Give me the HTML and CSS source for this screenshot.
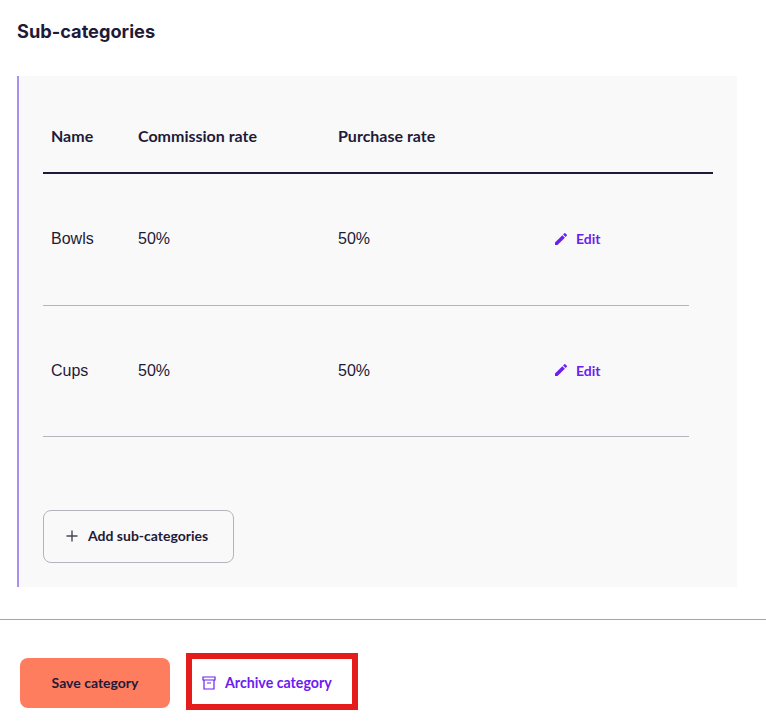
FILE: index.html
```html
<!DOCTYPE html>
<html lang="en">
<head>
    <meta charset="UTF-8" />
    <title>Sub-categories</title>
    <link rel="stylesheet" href="styles.css">
</head>
<body>
<section class="sub-section">
    <h2>Sub-categories</h2>
    <div class="panel">
        <div class="row head">
            <div>Name</div>
            <div>Commission rate</div>
            <div>Purchase rate</div>
        </div>
        <div class="row item">
            <div>Bowls</div>
            <div>50%</div>
            <div>50%</div>
            <a class="edit" href="#">
                <svg viewBox="0 0 24 24" width="16" height="16"><path d="M3 17.25V21h3.75L17.81 9.94l-3.75-3.75L3 17.25zM20.71 7.04a1 1 0 0 0 0-1.41l-2.34-2.34a1 1 0 0 0-1.41 0l-1.83 1.83 3.75 3.75 1.83-1.83z"/></svg>
                Edit
            </a>
        </div>
        <div class="row item">
            <div>Cups</div>
            <div>50%</div>
            <div>50%</div>
            <a class="edit" href="#">
                <svg viewBox="0 0 24 24" width="16" height="16"><path d="M3 17.25V21h3.75L17.81 9.94l-3.75-3.75L3 17.25zM20.71 7.04a1 1 0 0 0 0-1.41l-2.34-2.34a1 1 0 0 0-1.41 0l-1.83 1.83 3.75 3.75 1.83-1.83z"/></svg>
                Edit
            </a>
        </div>
        <button class="add-btn">
            <svg viewBox="0 0 12 12" width="12" height="12"><path d="M6 0.5v11M0.5 6h11"/></svg>
            Add sub-categories
        </button>
    </div>
</section>
<footer class="actions">
    <button class="save-btn">Save category</button>
    <div class="highlight">
        <a class="archive" href="#">
            <svg viewBox="0 0 14 14" width="14" height="14"><path d="M1 1h12v3H1zM2 4v9h10V4M5 7h4"/></svg>
            Archive category
        </a>
    </div>
</footer>
</body>
</html>
```

FILE: styles.css
```css
* {
  box-sizing: border-box;
}

body {
  margin: 0;
  font-family: "Liberation Sans", Arial, sans-serif;
  background: #fff;
  color: #1f1a38;
}

.sub-section {
  padding: 21px 29px 32px 17px;
}

h2 {
  margin: 0 0 35px;
  font-family: Inter, "Liberation Sans", sans-serif;
  font-size: 18.2px;
  line-height: 21px;
  font-weight: 700;
}

.panel {
  background: #f9f9f9;
  border-left: 2px solid #a98ff0;
  height: 511px;
  margin-top: -1px;
  padding-left: 24px;
}

.row {
  display: grid;
  grid-template-columns: 87px 200px 215px 1fr;
  padding-left: 8px;
  align-items: center;
}

.head {
  width: 670px;
  height: 98px;
  padding-top: 22px;
  border-bottom: 2px solid #1f1a38;
  font-family: Lato, sans-serif;
  font-weight: 700;
  font-size: 16px;
}

.item {
  width: 646px;
  height: 131.5px;
  border-bottom: 1px solid #b5b3bd;
  font-size: 16px;
}

.edit {
  display: flex;
  align-items: center;
  gap: 7px;
  margin-top: -1px;
  color: #6b20f0;
  font-family: Lato, sans-serif;
  font-weight: 700;
  font-size: 14px;
  text-decoration: none;
}

.edit svg {
  fill: #6b20f0;
}

.add-btn {
  display: flex;
  align-items: center;
  gap: 10px;
  width: 191px;
  height: 53px;
  margin-top: 73px;
  padding: 0 0 2px 22px;
  background: transparent;
  border: 1px solid #b5b3bd;
  border-radius: 8px;
  color: #1f1a38;
  font-family: Lato, sans-serif;
  font-weight: 700;
  font-size: 14px;
}

.add-btn svg {
  stroke: #4a4658;
  stroke-width: 1.4;
  fill: none;
}

.actions {
  display: flex;
  align-items: flex-start;
  gap: 16px;
  padding: 33px 0 0 20px;
  border-top: 1px solid #a5a5a5;
}

.save-btn {
  width: 150px;
  height: 50px;
  margin-top: 5px;
  padding: 0 0 2px;
  background: #ff7d5f;
  border: none;
  border-radius: 8px;
  color: #1f1a38;
  font-family: Lato, sans-serif;
  font-weight: 700;
  font-size: 14px;
}

.highlight {
  width: 172px;
  height: 57px;
  border: 6px solid #e61c1c;
  padding: 2px 0 0 10px;
  display: flex;
  align-items: center;
}

.archive {
  display: flex;
  align-items: center;
  gap: 9px;
  color: #6b20f0;
  font-family: Lato, sans-serif;
  font-weight: 700;
  font-size: 14.2px;
  text-decoration: none;
}

.archive svg {
  stroke: #6b20f0;
  stroke-width: 1.2;
  fill: none;
}
```
